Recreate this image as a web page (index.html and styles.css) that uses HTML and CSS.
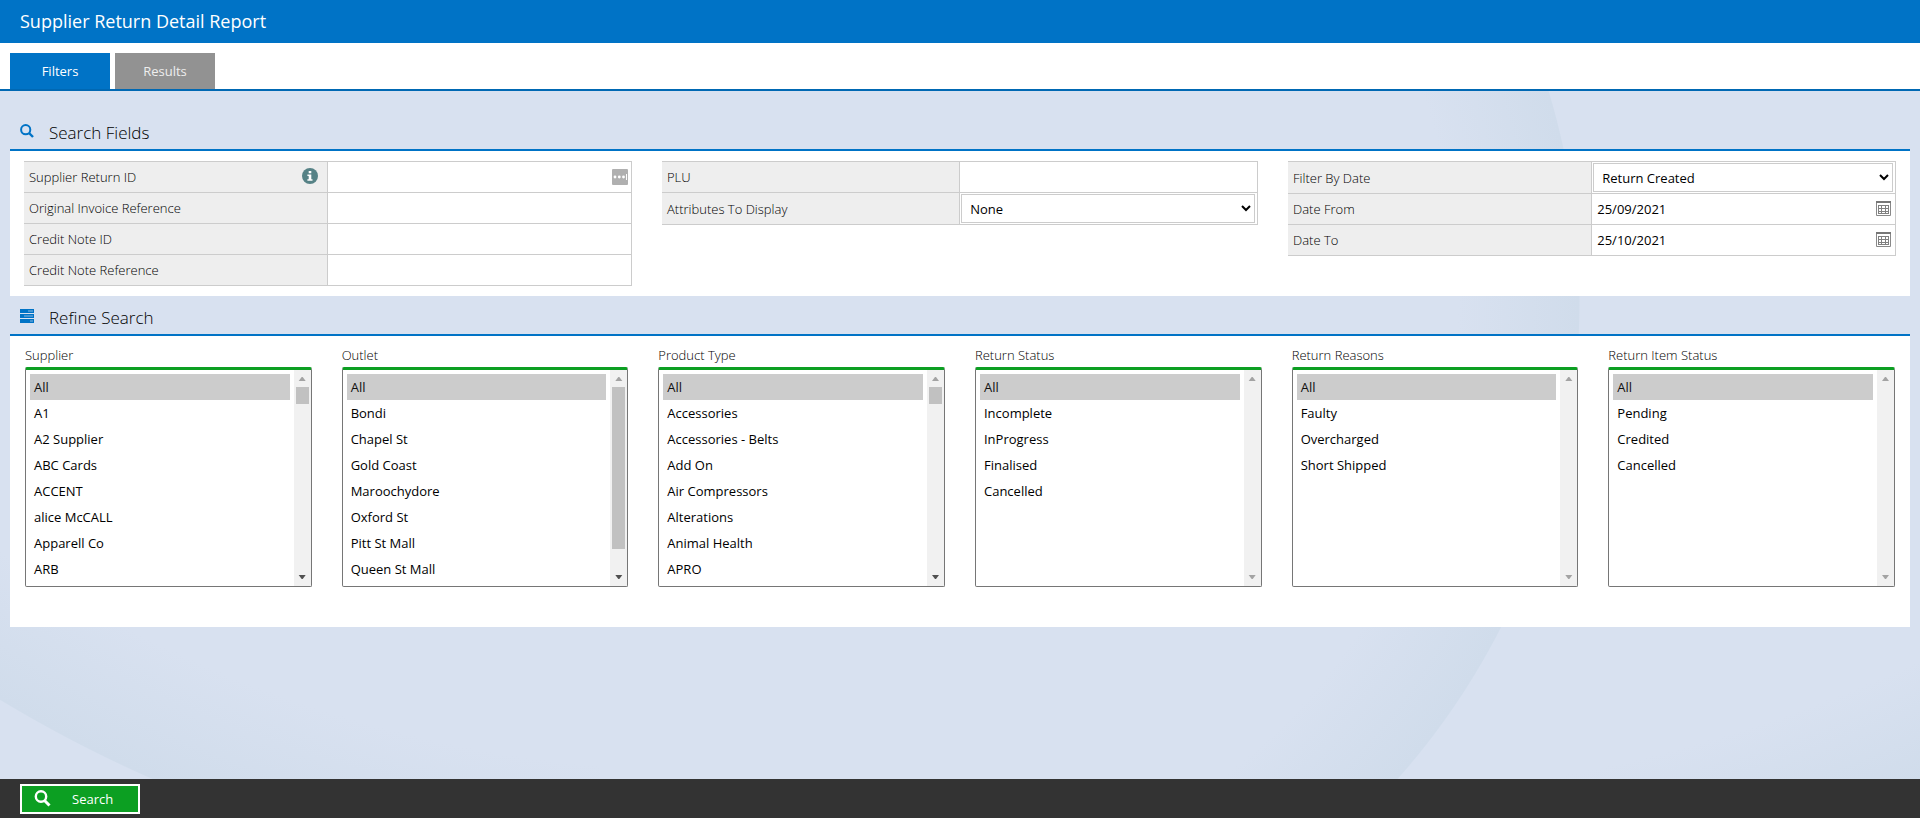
FILE: index.html
```html
<!DOCTYPE html>
<html lang="en">
<head>
    <meta charset="UTF-8">
    <meta name="viewport" content="width=device-width, initial-scale=1.0">
    <title>Supplier Return Detail Report</title>
    <link rel="stylesheet" href="styles.css">
</head>
<body>
    <header class="page-header">
        <h1>Supplier Return Detail Report</h1>
    </header>

    <nav class="tabs">
        <button type="button" class="tab active">Filters</button>
        <button type="button" class="tab">Results</button>
    </nav>

    <main class="content">
        <section>
            <h2 class="section-title">
                <svg class="section-icon" viewBox="0 0 14 14" aria-hidden="true">
                    <circle cx="5.7" cy="5.7" r="4.6" fill="none" stroke="#0073c6" stroke-width="2" />
                    <path d="M9 9l4 4" stroke="#0073c6" stroke-width="2.4" />
                </svg>
                Search Fields
            </h2>
            <div class="panel search-fields">
                <table class="fields">
                    <tr>
                        <th>
                            <div class="label-row">
                                <label for="returnId">Supplier Return ID</label>
                                <svg class="info" viewBox="0 0 16 16" aria-hidden="true">
                                    <circle cx="8" cy="8" r="8" fill="#568286" />
                                    <path d="M6.7 3h2.6v2.2H6.7zM5.4 6.6h3.9v4.6h1.2v1.6H5.4v-1.6h1.3V8.1H5.4z" fill="#fff" />
                                </svg>
                            </div>
                        </th>
                        <td>
                            <div class="input-row">
                                <input type="text" id="returnId">
                                <button type="button" class="icon-button" aria-label="Browse">
                                    <svg width="16" height="16" viewBox="0 0 16 16">
                                        <rect width="16" height="16" rx="1" fill="#b0b0b0" />
                                        <circle cx="3" cy="8" r="1.4" fill="#fff" />
                                        <circle cx="7.3" cy="8" r="1.4" fill="#fff" />
                                        <circle cx="11.5" cy="8" r="1.4" fill="#fff" />
                                        <path d="M14.5 5v6" stroke="#fff" stroke-width="1" />
                                    </svg>
                                </button>
                            </div>
                        </td>
                    </tr>
                    <tr>
                        <th><label for="invoiceRef">Original Invoice Reference</label></th>
                        <td><input type="text" id="invoiceRef"></td>
                    </tr>
                    <tr>
                        <th><label for="creditId">Credit Note ID</label></th>
                        <td><input type="text" id="creditId"></td>
                    </tr>
                    <tr>
                        <th><label for="creditRef">Credit Note Reference</label></th>
                        <td><input type="text" id="creditRef"></td>
                    </tr>
                </table>

                <table class="fields">
                    <tr>
                        <th><label for="plu">PLU</label></th>
                        <td><input type="text" id="plu"></td>
                    </tr>
                    <tr>
                        <th><label for="attributes">Attributes To Display</label></th>
                        <td class="select-cell">
                            <select id="attributes">
                                <option>None</option>
                            </select>
                        </td>
                    </tr>
                </table>

                <table class="fields">
                    <tr>
                        <th><label for="filterDate">Filter By Date</label></th>
                        <td class="select-cell">
                            <select id="filterDate">
                                <option>Return Created</option>
                            </select>
                        </td>
                    </tr>
                    <tr>
                        <th><label for="dateFrom">Date From</label></th>
                        <td>
                            <div class="input-row">
                                <input type="text" id="dateFrom" value="25/09/2021">
                                <button type="button" class="icon-button" aria-label="Pick from date">
                                    <svg width="17" height="16" viewBox="0 0 17 16">
                                        <path d="M1.5 1.5h14v13h-14z" fill="#fff" stroke="#888" />
                                        <path d="M1 1h15" stroke="#777" stroke-width="2" />
                                        <path d="M3 4.5h11M3 7.5h11M3 10.5h11M3 12.5h11M3.5 4v9M6.5 4v9M10.5 4v9M13.5 4v9" stroke="#808080" fill="none" />
                                    </svg>
                                </button>
                            </div>
                        </td>
                    </tr>
                    <tr>
                        <th><label for="dateTo">Date To</label></th>
                        <td>
                            <div class="input-row">
                                <input type="text" id="dateTo" value="25/10/2021">
                                <button type="button" class="icon-button" aria-label="Pick to date">
                                    <svg width="17" height="16" viewBox="0 0 17 16">
                                        <path d="M1.5 1.5h14v13h-14z" fill="#fff" stroke="#888" />
                                        <path d="M1 1h15" stroke="#777" stroke-width="2" />
                                        <path d="M3 4.5h11M3 7.5h11M3 10.5h11M3 12.5h11M3.5 4v9M6.5 4v9M10.5 4v9M13.5 4v9" stroke="#808080" fill="none" />
                                    </svg>
                                </button>
                            </div>
                        </td>
                    </tr>
                </table>
            </div>
        </section>

        <section>
            <h2 class="section-title">
                <svg class="section-icon" viewBox="0 0 14 14" aria-hidden="true">
                    <path d="M0 0h14v4H0zM0 5h14v4H0zM0 10h14v4H0z" fill="#0073c6" />
                    <path d="M8 2h5M4 7h9M10 12h3" stroke="#8ab8df" stroke-width="1" />
                </svg>
                Refine Search
            </h2>
            <div class="panel refine">
                <div class="list">
                    <label for="supplier">Supplier</label>
                    <div class="list-box">
                        <select id="supplier" multiple>
                            <option selected>All</option>
                            <option>A1</option>
                            <option>A2 Supplier</option>
                            <option>ABC Cards</option>
                            <option>ACCENT</option>
                            <option>alice McCALL</option>
                            <option>Apparell Co</option>
                            <option>ARB</option>
                        </select>
                        <div class="scrollbar" aria-hidden="true">
                            <span class="arrow up"></span>
                            <span class="thumb"></span>
                            <span class="arrow down"></span>
                        </div>
                    </div>
                </div>
                <div class="list">
                    <label for="outlet">Outlet</label>
                    <div class="list-box">
                        <select id="outlet" multiple>
                            <option selected>All</option>
                            <option>Bondi</option>
                            <option>Chapel St</option>
                            <option>Gold Coast</option>
                            <option>Maroochydore</option>
                            <option>Oxford St</option>
                            <option>Pitt St Mall</option>
                            <option>Queen St Mall</option>
                        </select>
                        <div class="scrollbar" aria-hidden="true">
                            <span class="arrow up"></span>
                            <span class="thumb long"></span>
                            <span class="arrow down"></span>
                        </div>
                    </div>
                </div>
                <div class="list">
                    <label for="productType">Product Type</label>
                    <div class="list-box">
                        <select id="productType" multiple>
                            <option selected>All</option>
                            <option>Accessories</option>
                            <option>Accessories - Belts</option>
                            <option>Add On</option>
                            <option>Air Compressors</option>
                            <option>Alterations</option>
                            <option>Animal Health</option>
                            <option>APRO</option>
                        </select>
                        <div class="scrollbar" aria-hidden="true">
                            <span class="arrow up"></span>
                            <span class="thumb"></span>
                            <span class="arrow down"></span>
                        </div>
                    </div>
                </div>
                <div class="list">
                    <label for="returnStatus">Return Status</label>
                    <div class="list-box">
                        <select id="returnStatus" multiple>
                            <option selected>All</option>
                            <option>Incomplete</option>
                            <option>InProgress</option>
                            <option>Finalised</option>
                            <option>Cancelled</option>
                        </select>
                        <div class="scrollbar disabled" aria-hidden="true">
                            <span class="arrow up"></span>
                            <span class="arrow down"></span>
                        </div>
                    </div>
                </div>
                <div class="list">
                    <label for="returnReasons">Return Reasons</label>
                    <div class="list-box">
                        <select id="returnReasons" multiple>
                            <option selected>All</option>
                            <option>Faulty</option>
                            <option>Overcharged</option>
                            <option>Short Shipped</option>
                        </select>
                        <div class="scrollbar disabled" aria-hidden="true">
                            <span class="arrow up"></span>
                            <span class="arrow down"></span>
                        </div>
                    </div>
                </div>
                <div class="list">
                    <label for="itemStatus">Return Item Status</label>
                    <div class="list-box">
                        <select id="itemStatus" multiple>
                            <option selected>All</option>
                            <option>Pending</option>
                            <option>Credited</option>
                            <option>Cancelled</option>
                        </select>
                        <div class="scrollbar disabled" aria-hidden="true">
                            <span class="arrow up"></span>
                            <span class="arrow down"></span>
                        </div>
                    </div>
                </div>
            </div>
        </section>
    </main>

    <footer class="footer">
        <button type="button" class="search-button">
            <svg width="17" height="17" viewBox="0 0 17 17" aria-hidden="true">
                <circle cx="7" cy="6.5" r="5.2" fill="none" stroke="#fff" stroke-width="2.4" />
                <path d="M10.5 10.5l5 5" stroke="#fff" stroke-width="3" />
            </svg>
            <span>Search</span>
        </button>
    </footer>
</body>
</html>
```

FILE: styles.css
```css
* {
    box-sizing: border-box;
}

body {
    margin: 0;
    min-height: 100vh;
    display: flex;
    flex-direction: column;
    font-family: 'Open Sans', sans-serif;
    font-size: 13px;
    color: #000;
    background-color: #d8e1f0;
}

input, select, button {
    font-family: inherit;
    font-size: 13px;
    color: inherit;
}

/* Header and tabs */
.page-header {
    background-color: #0073c6;
    color: #fff;
    padding: 0 20px;
}

.page-header h1 {
    margin: 0;
    font-size: 18px;
    font-weight: normal;
    line-height: 43px;
}

.tabs {
    display: flex;
    gap: 5px;
    padding: 10px 10px 0;
    background-color: #fff;
    border-bottom: 2px solid #0068b3;
}

.tab {
    width: 100px;
    height: 36px;
    border: none;
    background-color: #929292;
    color: #eee;
}

.tab.active {
    background-color: #0073c6;
    color: #fff;
}

/* Content */
.content {
    flex: 1;
    padding: 20px 10px;
    background-image:
        radial-gradient(circle at 0 209px, transparent 600px, #d0dceb 721px, transparent 722px),
        radial-gradient(circle at 700px -552px, transparent 1230px, #d0dceb 1355px, transparent 1356px),
        radial-gradient(circle at -130px -781px, transparent 1490px, #d0dceb 1600px);
    background-size: 800px 100%, 600px 100%, 500px 100%;
    background-position: 858px 0, 0 0, 100% 0;
    background-repeat: no-repeat;
}

.section-title {
    display: flex;
    align-items: center;
    gap: 15px;
    height: 40px;
    margin: 0;
    padding: 4px 10px 0;
    border-bottom: 2px solid #0073c6;
    font-size: 17px;
    font-weight: 300;
}

.section-icon {
    width: 14px;
    height: 14px;
    margin-bottom: 3px;
}

.panel {
    background-color: #fff;
}

/* Search fields */
.search-fields {
    display: grid;
    grid-template-columns: 608fr 596fr 608fr;
    align-items: start;
    gap: 30px;
    padding: 10px 14px;
}

.fields {
    width: 100%;
    table-layout: fixed;
    border-collapse: collapse;
}

.fields th {
    height: 31px;
    padding: 0 5px;
    text-align: left;
    font-weight: 300;
    background-color: #eee;
    border: 1px solid #ccc;
    border-left: none;
}

.fields td {
    padding: 0;
    border: 1px solid #ccc;
}

.label-row, .input-row {
    display: flex;
    align-items: center;
    justify-content: space-between;
}

.info {
    width: 16px;
    height: 16px;
    margin: 0 4px 2px 0;
}

.fields input {
    display: block;
    width: 100%;
    height: 30px;
    padding: 0 5px;
    border: none;
    background: none;
    outline: none;
}

.icon-button {
    display: flex;
    padding: 0 3px;
    border: none;
    background: none;
}

.fields .select-cell {
    padding: 1px 2px 1px 1px;
}

.fields select {
    display: block;
    width: 100%;
    height: 29px;
    padding: 0 4px;
    border: 1px solid #ccc;
    background-color: #fff;
}

/* Refine search */
.refine {
    display: grid;
    grid-template-columns: repeat(6, 1fr);
    gap: 30px;
    padding: 10px 15px 40px;
}

.list label {
    display: block;
    margin-bottom: 2px;
    line-height: 19px;
    font-weight: 300;
}

.list-box {
    display: flex;
    height: 220px;
    border: 1px solid #767676;
    border-top: 3px solid #0c9f22;
    border-radius: 2px;
    background-color: #fff;
}

.list-box select {
    flex: 1;
    min-width: 0;
    padding: 4px;
    border: none;
    background: none;
    outline: none;
}

.list-box option {
    min-height: 26px;
    padding: 4px;
    line-height: 18px;
}

.list-box option:checked {
    background-color: #ccc;
}

/* Scrollbar */
.scrollbar {
    display: flex;
    flex-direction: column;
    align-items: center;
    width: 17px;
    background-color: #f1f1f1;
}

.arrow {
    width: 17px;
    height: 17px;
    background-color: #505050;
}

.arrow.up {
    background-color: #a3a3a3;
    clip-path: polygon(5px 11px, 12px 11px, 9px 7px, 8px 7px);
}

.arrow.down {
    margin-top: auto;
    clip-path: polygon(5px 6px, 12px 6px, 9px 10px, 8px 10px);
}

.scrollbar.disabled .arrow {
    background-color: #a3a3a3;
}

.thumb {
    width: 13px;
    height: 17px;
    background-color: #c1c1c1;
}

.thumb.long {
    height: 162px;
}

/* Footer */
.footer {
    background-color: #333;
    padding: 5px 20px 4px;
}

.search-button {
    display: flex;
    align-items: center;
    width: 120px;
    height: 30px;
    padding: 0 12px;
    gap: 21px;
    border: 2px solid #fff;
    background-color: #0c9f22;
    color: #fff;
}

.search-button svg {
    margin-bottom: 2px;
}
```
